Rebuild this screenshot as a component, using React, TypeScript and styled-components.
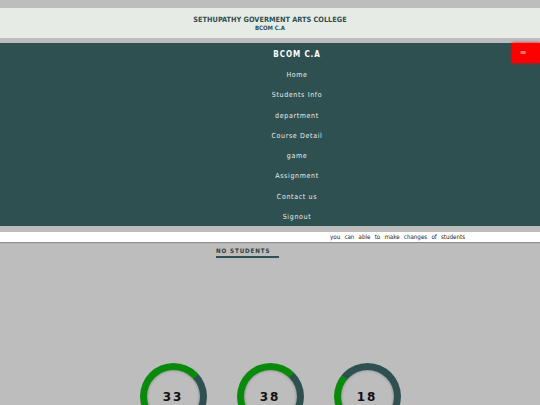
import React from 'react';
import styled, { createGlobalStyle } from 'styled-components';

const GlobalStyle = createGlobalStyle`
  html, body {
    margin: 0;
    padding: 0;
    background: #bdbdbd;
    font-family: "DejaVu Sans Condensed", "DejaVu Sans", sans-serif;
  }
  body {
    padding-top: 8px;
  }
`;

const Banner = styled.header`
  background: #e7ebe6;
  height: 30px;
  display: flex;
  flex-direction: column;
  align-items: center;
  justify-content: center;
  color: #2f5050;
`;

const CollegeName = styled.div`
  font-size: 7.3px;
  font-weight: bold;
  line-height: 9px;
`;

const CollegeSub = styled.div`
  font-size: 6px;
  font-weight: bold;
  line-height: 8px;
`;

const Nav = styled.nav`
  position: relative;
  margin-top: 5px;
  background: #2f5050;
  height: 183px;
  display: flex;
  flex-direction: column;
  align-items: center;
  padding-left: 54px;
  padding-top: 1px;
  box-sizing: border-box;
`;

const Brand = styled.div`
  color: #ffffff;
  font-size: 8px;
  font-weight: bold;
  letter-spacing: 0.9px;
  height: 21px;
  line-height: 21px;
`;

const MenuList = styled.ul`
  list-style: none;
  margin: 0;
  padding: 0;
  display: flex;
  flex-direction: column;
  align-items: center;
`;

const MenuItem = styled.li`
  color: #e6ecec;
  font-size: 7px;
  letter-spacing: 0.65px;
  height: 20.3px;
  line-height: 20.3px;
`;

const MenuToggle = styled.button`
  position: absolute;
  top: 0;
  right: 0;
  width: 28px;
  height: 20px;
  border: none;
  padding: 0 6px 0 0;
  background: #ff0000;
  box-shadow: 0 0 3px #ff0000;
  color: #ffc0c0;
  font-size: 8px;
  line-height: 20px;
  text-align: center;
  font-family: "DejaVu Sans", sans-serif;
`;

const NoticeStrip = styled.div`
  margin-top: 6px;
  background: #ffffff;
  height: 10px;
  box-shadow: 0 1px 1px #8d8d8d;
  font-size: 6.2px;
  line-height: 10px;
  color: #222;
  word-spacing: 2.4px;
  padding-left: 330px;
  white-space: nowrap;
`;

const Section = styled.section`
  display: flex;
  padding-left: 216px;
  padding-top: 5px;
`;

const SectionTitle = styled.div`
  font-size: 6.2px;
  font-weight: bold;
  letter-spacing: 0.9px;
  line-height: 8px;
  color: #2f4040;
  padding-bottom: 1px;
  border-bottom: 2px solid #2f5050;
  width: 63px;
`;

const Rings = styled.div`
  display: flex;
  justify-content: center;
  gap: 30px;
  margin-top: 105px;
`;

const Ring = styled.div<{ $span: number }>`
  width: 67px;
  height: 67px;
  border-radius: 50%;
  background: conic-gradient(
    from 180deg,
    #0a8a0a 0deg ${p => p.$span}deg,
    #2f5050 ${p => p.$span}deg 360deg
  );
  display: flex;
  align-items: center;
  justify-content: center;
`;

const RingInner = styled.div`
  width: 53px;
  height: 53px;
  border-radius: 50%;
  background: #bdbdbd;
  box-shadow: inset 0 0 3px rgba(0, 0, 0, 0.35);
  display: flex;
  align-items: center;
  justify-content: center;
  font-family: "DejaVu Sans", sans-serif;
  font-size: 12px;
  font-weight: bold;
  letter-spacing: 2px;
  color: #111;
`;

const menu = ['Home', 'Students Info', 'department', 'Course Detail', 'game', 'Assignment', 'Contact us', 'Signout'];

const stats = [
  { value: 33, span: 228 },
  { value: 38, span: 224 },
  { value: 18, span: 130 },
];

export default function App() {
  return (
    <>
      <GlobalStyle />
      <Banner>
        <CollegeName>SETHUPATHY GOVERMENT ARTS COLLEGE</CollegeName>
        <CollegeSub>BCOM C.A</CollegeSub>
      </Banner>
      <Nav>
        <Brand>BCOM C.A</Brand>
        <MenuList>
          {menu.map(m => (
            <MenuItem key={m}>{m}</MenuItem>
          ))}
        </MenuList>
        <MenuToggle>≡</MenuToggle>
      </Nav>
      <NoticeStrip>you can able to make changes of students</NoticeStrip>
      <Section>
        <SectionTitle>NO STUDENTS</SectionTitle>
      </Section>
      <Rings>
        {stats.map(s => (
          <Ring key={s.value} $span={s.span}>
            <RingInner>{s.value}</RingInner>
          </Ring>
        ))}
      </Rings>
    </>
  );
}
